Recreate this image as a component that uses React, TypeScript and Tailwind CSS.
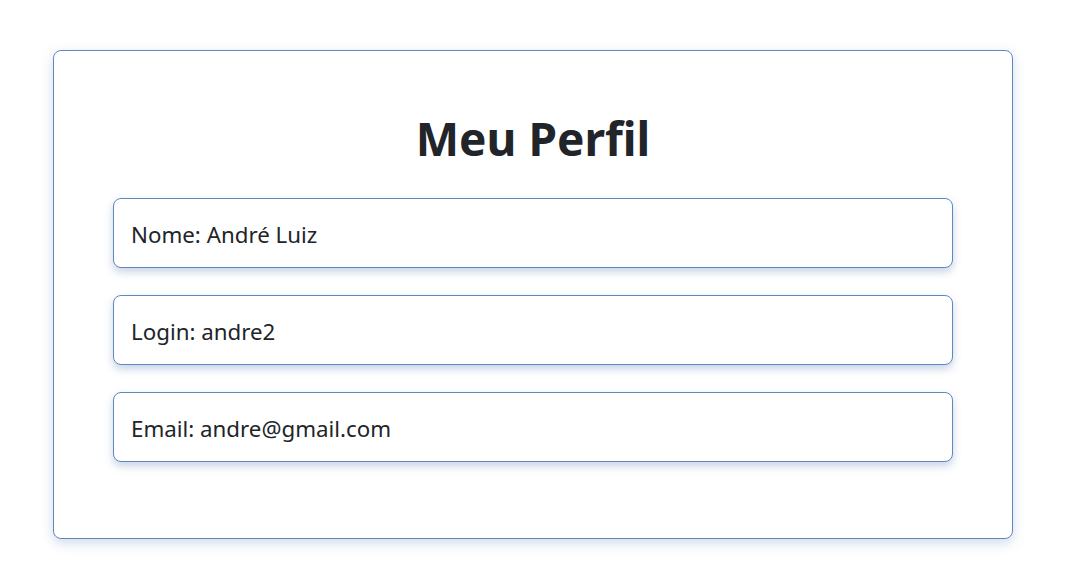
import React from 'react';

const FIELDS = [
  { label: 'Nome', value: 'André Luiz' },
  { label: 'Login', value: 'andre2' },
  { label: 'Email', value: 'andre@gmail.com' },
];

export default function App() {
  return (
    <div className="min-h-screen bg-white pt-[50px] pl-[53px] font-['Noto_Sans',sans-serif] text-[#212529]">
      <div className="w-[960px] h-[489px] rounded-lg border border-[#5f88c0] bg-white shadow-[0_4px_12px_rgba(70,110,170,0.25)] px-[59px] pt-[51px]">
        <h1 className="text-center text-[46px] font-bold leading-[72px] mb-[24px]">Meu Perfil</h1>
        <div className="flex flex-col gap-[27px]">
          {FIELDS.map(f => (
            <div
              key={f.label}
              className="h-[70px] rounded-lg border border-[#5f88c0] bg-white shadow-[0_4px_8px_rgba(70,110,170,0.3)] flex items-center px-[17px] pt-[4px] text-[22.3px]"
            >
              {f.label}: {f.value}
            </div>
          ))}
        </div>
      </div>
    </div>
  );
}
